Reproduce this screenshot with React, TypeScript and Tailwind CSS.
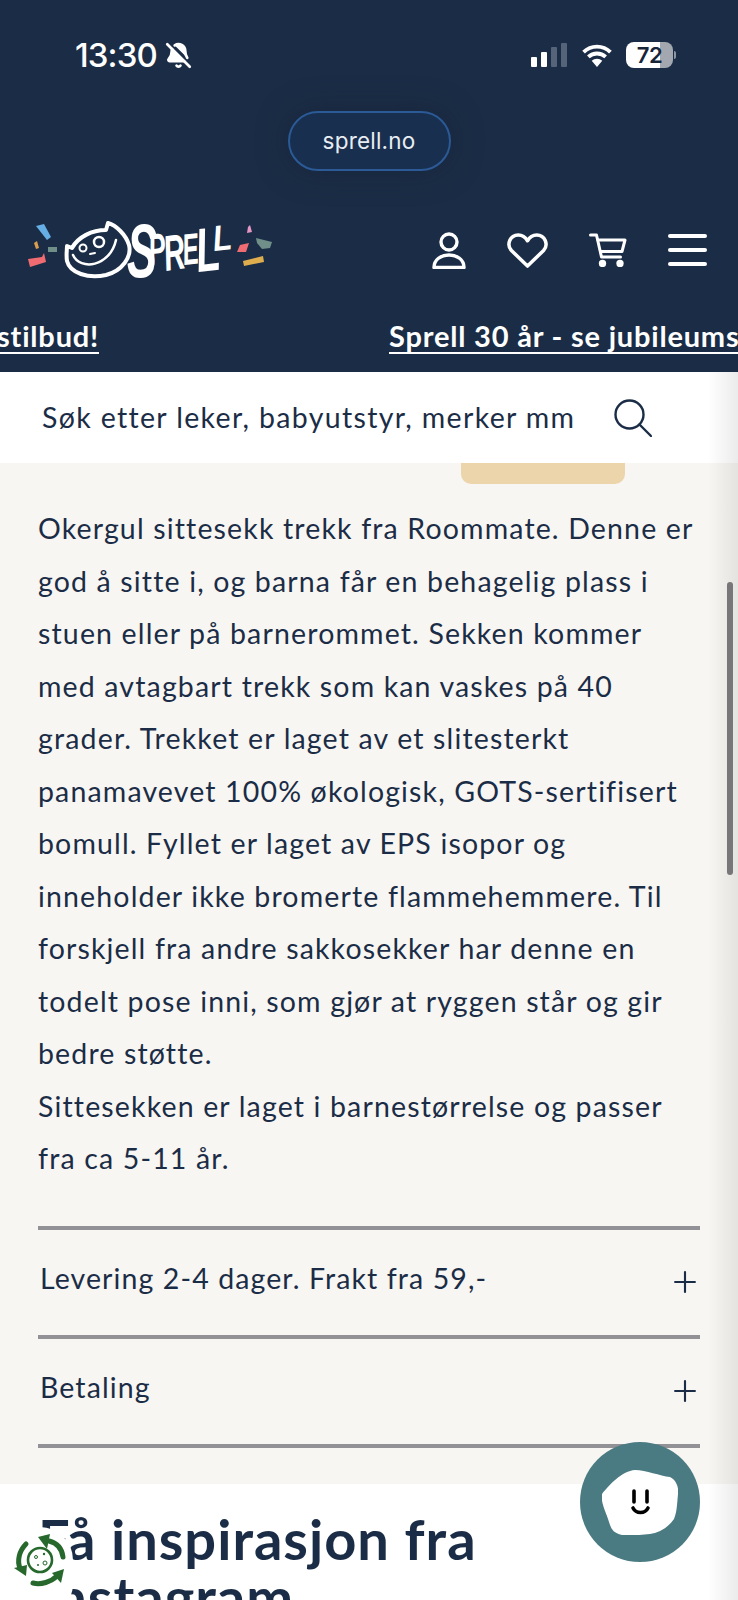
import { Plus, BellOff } from 'lucide-react'

const body = [
  'Okergul sittesekk trekk fra Roommate. Denne er',
  'god å sitte i, og barna får en behagelig plass i',
  'stuen eller på barnerommet. Sekken kommer',
  'med avtagbart trekk som kan vaskes på 40',
  'grader. Trekket er laget av et slitesterkt',
  'panamavevet 100% økologisk, GOTS-sertifisert',
  'bomull. Fyllet er laget av EPS isopor og',
  'inneholder ikke bromerte flammehemmere. Til',
  'forskjell fra andre sakkosekker har denne en',
  'todelt pose inni, som gjør at ryggen står og gir',
  'bedre støtte.',
  'Sittesekken er laget i barnestørrelse og passer',
  'fra ca 5-11 år.',
]

function StatusBar() {
  return (
    <div className="flex h-[111px] items-start justify-between pl-[75px] pr-[62px] pt-[36px]">
      <div className="flex items-center gap-[8px] font-['Inter',sans-serif] text-[33px] font-medium leading-[38px] tracking-[-0.9px] text-white">
        13:30
        <BellOff size={27} strokeWidth={2.4} className="fill-white" />
      </div>
      <div className="flex items-center gap-[14px] pt-[6px]">
        <div className="flex items-end gap-[4px]">
          <div className="h-[10px] w-[6px] rounded-[1px] bg-white" />
          <div className="h-[15px] w-[6px] rounded-[1px] bg-white" />
          <div className="h-[20px] w-[6px] rounded-[1px] bg-[#56647a]" />
          <div className="h-[24px] w-[6px] rounded-[1px] bg-[#56647a]" />
        </div>
        <svg width="32" height="23" viewBox="0 0 32 24">
          <path d="M2 8.500a20 20 0 0 1 28 0M7 13.500a13 13 0 0 1 18 0" fill="none" stroke="#fff" strokeWidth="4" />
          <path d="M10.500 17.500a8 8 0 0 1 11 0L16 24Z" fill="#fff" />
        </svg>
        <div className="-ml-[1px] flex items-center">
          <div className="flex h-[26px] w-[47px] items-center justify-center overflow-hidden rounded-[8px] bg-[linear-gradient(90deg,#fff_72%,#a3a8b0_72%)] font-['Inter',sans-serif] text-[22px] font-semibold tracking-[-0.5px] text-[#16253a]">
            72
          </div>
          <div className="ml-[1px] h-[8px] w-[2px] rounded-r-full bg-[#8e96a3]" />
        </div>
      </div>
    </div>
  )
}

function Logo() {
  return (
    <svg width="250" height="70" viewBox="0 0 250 70">
      <path d="M10 11l8-2 7 13-4 3Z" fill="#66aee6" />
      <path d="M8 28l3-2 2 7-3 1Z" fill="#dc9d4d" />
      <path d="M22 32h9v5h-9Z" fill="#6f8f88" />
      <path d="M2 44l14-2 2-4 2 9-16 5Z" fill="#f16c72" />
      <path d="M214 30l9-2-3 9-9 0Z" fill="#f16c72" />
      <path d="M222 12l2-2 2 7-5 1Z" fill="#e697c4" />
      <path d="M230 23l16 4-2 6-8 1-5-6Z" fill="#6f8f88" />
      <path d="M217 46l20-5 1 6-20 4Z" fill="#deae4e" />
      <g fill="none" stroke="#fff" strokeLinecap="round" strokeLinejoin="round">
        <path d="M41 31 46 33C52 22 66 15 80 15L82 8C90 10 100 20 103 30 106 42 96 56 80 60 62 64 44 58 41 46 40 40 41 35 41 31Z" strokeWidth="4" />
        <path d="M47 40C54 56 84 52 90 25" strokeWidth="2.500" />
        <circle cx="57" cy="33" r="3.500" strokeWidth="2" />
        <circle cx="73" cy="27" r="5" strokeWidth="2.500" />
        <path d="M64 39l5-1" strokeWidth="2" />
      </g>
      <g fill="#fff" fontFamily="'Liberation Sans', sans-serif" fontStyle="italic" fontWeight="700">
        <text x="101" y="62" fontSize="76" textLength="30" lengthAdjust="spacingAndGlyphs">S</text>
        <text x="124" y="50" fontSize="44" textLength="17" lengthAdjust="spacingAndGlyphs" transform="rotate(-6 124 50)">P</text>
        <text x="140" y="56" fontSize="50" textLength="21" lengthAdjust="spacingAndGlyphs" transform="rotate(-8 140 56)">R</text>
        <text x="158" y="50" fontSize="44" textLength="16" lengthAdjust="spacingAndGlyphs" transform="rotate(-6 158 50)">E</text>
        <text x="172" y="57" fontSize="62" textLength="24" lengthAdjust="spacingAndGlyphs" transform="rotate(-6 172 57)">L</text>
        <text x="188" y="36" fontSize="36" textLength="19" lengthAdjust="spacingAndGlyphs" transform="rotate(-6 188 36)">L</text>
      </g>
    </svg>
  )
}

function Nav() {
  return (
    <div className="flex h-[70px] items-center justify-between pl-[26px] pr-[31px]">
      <Logo />
      <div className="flex items-center gap-[41px]">
        <svg width="34" height="37" viewBox="0 0 34 37" fill="none" stroke="#fff" strokeWidth="3.400" strokeLinejoin="round">
          <circle cx="17" cy="10" r="8" />
          <path d="M2 35.500C2 27.500 9 23 17 23s15 4.500 15 12.500Z" />
        </svg>
        <svg width="41" height="35" viewBox="0 0 42 36" fill="none" stroke="#fff" strokeWidth="3.600" strokeLinejoin="round">
          <path d="M21 34 4.500 18C-1 12 3 2 11.500 2 16 2 19 4.500 21 8c2-3.500 5-6 9.500-6C39 2 43 12 37.500 18Z" />
        </svg>
        <svg width="38" height="34" viewBox="0 0 38 34" fill="none" stroke="#fff" strokeWidth="3" strokeLinecap="round" strokeLinejoin="round">
          <path d="M1.500 2H7.500l5 22h19" />
          <path d="M9 7h27l-3 11.500H12" />
          <circle cx="13.500" cy="30.500" r="2.200" fill="#fff" />
          <circle cx="31" cy="30.500" r="2.200" fill="#fff" />
        </svg>
        <div className="flex w-[39px] flex-col gap-[10px]">
          <div className="h-[4px] rounded-full bg-white" />
          <div className="h-[4px] rounded-full bg-white" />
          <div className="h-[4px] rounded-full bg-white" />
        </div>
      </div>
    </div>
  )
}

function Ticker() {
  return (
    <div className="flex h-[69px] items-start overflow-hidden pt-[35px] font-['Lato',sans-serif] text-[29px] font-bold leading-[32px] tracking-[0.8px] text-white">
      <div className="flex w-[99px] shrink-0 justify-end overflow-hidden">
        <span className="whitespace-nowrap border-b-[2px] border-white">stilbud!</span>
      </div>
      <span className="ml-[290px] whitespace-nowrap border-b-[2px] border-white">Sprell 30 år - se jubileumstilbud!</span>
    </div>
  )
}

function Accordion({ label }: { label: string }) {
  return (
    <div className="flex h-[109px] items-center justify-between border-b-[4px] border-[#929296] pb-[8px] pl-[2px]">
      <span className="text-[28.5px] tracking-[1.1px]">{label}</span>
      <Plus size={34} strokeWidth={1.5} className="-mr-[2px] mt-[8px] text-[#1b2d46]" />
    </div>
  )
}

export default function App() {
  return (
    <div className="relative h-[1600px] w-[738px] overflow-hidden bg-white font-['Lato',sans-serif] text-[#1b2d46]">
      <header className="bg-[#1b2d46]">
        <StatusBar />
        <div className="flex h-[104px] justify-center">
          <div className="flex h-[60px] w-[163px] items-center justify-center rounded-full border-2 border-[#2b5a96] bg-[#182f4f] font-['Inter',sans-serif] text-[22.5px] tracking-[0.2px] text-[#e8edf3] shadow-[0_0_30px_rgba(20,30,50,0.5)]">
            sprell.no
          </div>
        </div>
        <Nav />
        <Ticker />
        <div className="h-[18px]" />
      </header>

      <div className="flex h-[91px] items-center gap-[39px] bg-white pl-[42px] shadow-[0_2px_2px_rgba(0,0,0,0.08)]">
        <span className="text-[28.5px] tracking-[1.34px] text-[#1b2d46]">Søk etter leker, babyutstyr, merker mm</span>
        <svg width="38" height="38" viewBox="0 0 38 38" fill="none" stroke="#1b2d46" strokeWidth="2.400" strokeLinecap="round">
          <circle cx="15.500" cy="15.500" r="14" />
          <path d="M25.500 25.500 37 37" />
        </svg>
      </div>

      <main className="h-[1021px] bg-[#f8f6f3] px-[38px]">
        <div className="ml-[423px] h-[21px] w-[164px] rounded-b-[10px] bg-[#ecd5ab]" />
        <div className="pt-[18px] text-[28.5px] leading-[52.5px] tracking-[1.15px]">
          {body.map((line) => (
            <div key={line} className="whitespace-nowrap">{line}</div>
          ))}
        </div>
        <div className="mt-[41px] h-[4px] bg-[#929296]" />
        <Accordion label="Levering 2-4 dager. Frakt fra 59,-" />
        <Accordion label="Betaling" />
      </main>

      <section className="px-[38px] pt-[26px]">
        <h2 className="text-[56px] font-bold leading-[58px] tracking-[1px]">
          Få inspirasjon fra
          <br />
          Instagram
        </h2>
      </section>

      <div className="pointer-events-none absolute bottom-0 right-0 top-[372px] w-[30px] bg-gradient-to-r from-transparent to-[#00000014]" />
      <div className="absolute left-[727px] top-[582px] h-[293px] w-[6px] rounded-full bg-[#77777a]" />

      <div className="absolute left-[580px] top-[1442px] flex h-[120px] w-[120px] items-center justify-center rounded-full bg-[#4a7b82]">
        <svg width="76" height="65" viewBox="0 0 76 65">
          <path d="M0 24C8 14 20 1 33 0 44 0 58 6 68 7 74 10 77 17 76 24 75 34 75 42 72 49 66 58 56 63 48 64 38 65 28 66 20 65 12 63 10 60 8 55 5 44 -2 32 0 24Z" fill="#fff" />
          <path d="M32 21v11M45 21v11" stroke="#000" strokeWidth="3.600" strokeLinecap="round" />
          <path d="M31 38c3 6 12 6 15 0" stroke="#000" strokeWidth="3.600" strokeLinecap="round" fill="none" />
        </svg>
      </div>

      <div className="absolute left-[7px] top-[1527px] h-[90px] w-[66px] rounded-[33px] bg-white">
        <svg width="66" height="66" viewBox="0 0 66 66" fill="none">
          <circle cx="33" cy="33" r="12" stroke="#27682c" strokeWidth="2.600" fill="#fff" />
          <circle cx="29" cy="30" r="1.500" stroke="#27682c" />
          <circle cx="37" cy="27" r="1.200" fill="#27682c" />
          <circle cx="38" cy="36" r="2" stroke="#27682c" />
          <circle cx="31" cy="38" r="1" fill="#27682c" />
          <path d="M42 14C50 16 55 22 56 30" stroke="#27682c" strokeWidth="5" strokeLinecap="round" />
          <path d="M31 10 43 7 40 22Z" fill="#27682c" />
          <path d="M26 56C34 58 44 55 50 49" stroke="#27682c" strokeWidth="5" strokeLinecap="round" />
          <path d="M57 42 45 46 54 56Z" fill="#27682c" />
          <path d="M19 17C12 24 10 34 13 41" stroke="#27682c" strokeWidth="5" strokeLinecap="round" />
          <path d="M19 49 7 41 20 38Z" fill="#27682c" />
        </svg>
      </div>
    </div>
  )
}
